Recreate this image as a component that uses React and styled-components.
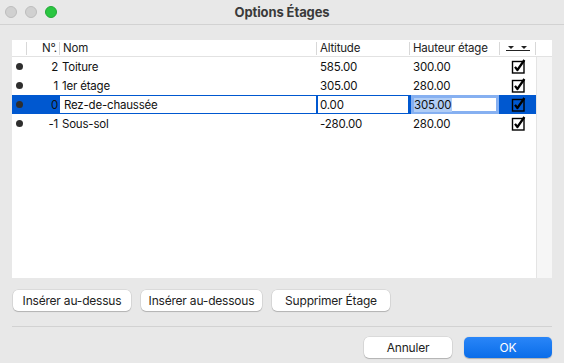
import React from "react";
import styled, { createGlobalStyle } from "styled-components";

const floors = [
  { num: 2, name: "Toiture", alt: "585.00", height: "300.00" },
  { num: 1, name: "1er étage", alt: "305.00", height: "280.00" },
  { num: 0, name: "Rez-de-chaussée", alt: "0.00", height: "305.00", selected: true },
  { num: -1, name: "Sous-sol", alt: "-280.00", height: "280.00" },
];

const COLS = "15px 33px 257px 93px 90px 36px";

const GlobalStyle = createGlobalStyle`
  html, body {
    margin: 0;
    padding: 0;
    background: #e8e8e8;
  }
  body {
    font-family: Inter, "Liberation Sans", sans-serif;
    font-size: 11.5px;
    letter-spacing: -0.2px;
    color: #1a1a1a;
  }
`;

export default function App() {
  return (
    <>
      <GlobalStyle />
      <Window>
        <TitleBar>
          <Lights>
            <Light />
            <Light />
            <Light $color="#2ac641" $border="#22a836" />
          </Lights>
          <Title>Options Étages</Title>
          <span />
        </TitleBar>

        <Content>
          <Table>
            <HeaderRow>
              <HeadCell />
              <HeadCell $align="right">N°.</HeadCell>
              <HeadCell>Nom</HeadCell>
              <HeadCell>Altitude</HeadCell>
              <HeadCell>Hauteur étage</HeadCell>
              <HeadCell $align="center">
                <SortIcon />
              </HeadCell>
              <HeadCell $last />
            </HeaderRow>
            <TableBody>
              <Rows>
                {floors.map((f) => (
                  <FloorRow key={f.num} floor={f} />
                ))}
              </Rows>
              <ScrollTrack />
            </TableBody>
          </Table>

          <ActionRow>
            <Button $w={118}>Insérer au-dessus</Button>
            <Button $w={121}>Insérer au-dessous</Button>
            <Button $w={118}>Supprimer Étage</Button>
          </ActionRow>

          <Divider />

          <Footer>
            <Button $w={88}>Annuler</Button>
            <Button $w={88} $primary>
              OK
            </Button>
          </Footer>
        </Content>
      </Window>
    </>
  );
}

function FloorRow({ floor }) {
  if (floor.selected) {
    return (
      <Row $selected>
        <Cell $align="center">
          <Dot />
        </Cell>
        <Cell $align="right">{floor.num}</Cell>
        <Cell>
          <EditField>{floor.name}</EditField>
        </Cell>
        <Cell>
          <EditField $inset>{floor.alt}</EditField>
        </Cell>
        <Cell>
          <FocusField>
            <Selection>{floor.height}</Selection>
          </FocusField>
        </Cell>
        <Cell $align="center">
          <CheckBox />
        </Cell>
      </Row>
    );
  }
  return (
    <Row>
      <Cell $align="center">
        <Dot />
      </Cell>
      <Cell $align="right">{floor.num}</Cell>
      <Cell $pad={2}>{floor.name}</Cell>
      <Cell $pad={3}>{floor.alt}</Cell>
      <Cell $pad={3}>{floor.height}</Cell>
      <Cell $align="center">
        <CheckBox />
      </Cell>
    </Row>
  );
}

function SortIcon() {
  return (
    <svg width="24" height="8" viewBox="0 0 24 8">
      <path d="M2 2h6l-3 3z" fill="#222" />
      <path d="M15 2h6l-3 3z" fill="#222" />
      <path d="M0 6.5h24" stroke="#222" strokeWidth="1" />
    </svg>
  );
}

function CheckBox() {
  return (
    <svg width="15" height="15" viewBox="0 0 15 15">
      <rect x="1.5" y="2.5" width="11.5" height="11.5" fill="none" stroke="#000" strokeWidth="1.4" />
      <path d="M4 7.8l2.4 3.2L13.4 1" fill="none" stroke="#000" strokeWidth="2.2" strokeLinejoin="round" />
    </svg>
  );
}

const Window = styled.div`
  width: 564px;
  height: 363px;
  display: flex;
  flex-direction: column;
  background: #e8e8e8;
  overflow: hidden;
`;

const TitleBar = styled.div`
  height: 24px;
  flex: none;
  display: grid;
  grid-template-columns: 1fr auto 1fr;
  align-items: center;
  border-bottom: 1px solid #d2d2d2;
  background: #e8e8e8;
`;

const Lights = styled.div`
  display: flex;
  gap: 8px;
  padding-left: 5px;
`;

const Light = styled.div`
  width: 12px;
  height: 12px;
  border-radius: 50%;
  box-sizing: border-box;
  background: ${({ $color }) => $color || "#d0d0d0"};
  border: 0.5px solid ${({ $border }) => $border || "#bdbdbd"};
`;

const Title = styled.div`
  font-size: 13px;
  font-weight: 700;
  letter-spacing: -0.1px;
  color: #3a3a3a;
`;

const Content = styled.div`
  padding: 15px 12px 0 12px;
  display: flex;
  flex-direction: column;
`;

const Table = styled.div`
  width: 540px;
  height: 238px;
  background: #fff;
  display: flex;
  flex-direction: column;
`;

const HeaderRow = styled.div`
  display: grid;
  grid-template-columns: ${COLS} 16px;
  height: 16px;
  align-items: center;
  border-bottom: 1px solid #e2e2e2;
  color: #222;
`;

const HeadCell = styled.div`
  height: 13px;
  line-height: 13px;
  display: flex;
  align-items: center;
  justify-content: ${({ $align }) =>
    $align === "right" ? "flex-end" : $align === "center" ? "center" : "flex-start"};
  padding: ${({ $align }) => ($align === "right" ? "0 2px 0 0" : $align === "center" ? "0" : "0 0 0 3px")};
  border-right: ${({ $last }) => ($last ? "none" : "1px solid #d8d8d8")};
  white-space: nowrap;
`;

const TableBody = styled.div`
  flex: 1;
  display: flex;
`;

const Rows = styled.div`
  flex: 1;
  display: flex;
  flex-direction: column;
`;

const ScrollTrack = styled.div`
  width: 15px;
  background: #f6f6f6;
  border-left: 1px solid #e4e4e4;
`;

const Row = styled.div`
  display: grid;
  grid-template-columns: ${COLS};
  height: 19px;
  align-items: center;
  background: ${({ $selected }) => ($selected ? "#0058d0" : "transparent")};
  color: #111;
`;

const Cell = styled.div`
  height: 19px;
  display: flex;
  align-items: center;
  justify-content: ${({ $align }) =>
    $align === "right" ? "flex-end" : $align === "center" ? "center" : "flex-start"};
  padding-left: ${({ $pad }) => ($pad || 0)}px;
  padding-right: ${({ $align }) => ($align === "right" ? 2 : 0)}px;
  white-space: nowrap;
`;

const Dot = styled.div`
  width: 7px;
  height: 7px;
  border-radius: 50%;
  background: #2e2e2e;
`;

const EditField = styled.div`
  flex: 1;
  align-self: stretch;
  margin: 1px ${({ $inset }) => ($inset ? "2px 1px 1px" : "1px 1px 0")};
  background: #fff;
  display: flex;
  align-items: center;
  padding-left: ${({ $inset }) => ($inset ? 2 : 4)}px;
  color: #111;
`;

const FocusField = styled.div`
  flex: 1;
  align-self: stretch;
  margin: 0 1px;
  border: 3px solid #86b0f1;
  background: #fff;
  display: flex;
  align-items: center;
  padding-left: 0;
`;

const Selection = styled.span`
  background: #b0cdf6;
  color: #111;
  line-height: 14px;
  padding-right: 1px;
`;

const ActionRow = styled.div`
  display: flex;
  gap: 10px;
  margin-top: 12px;
  padding-left: 1px;
`;

const Button = styled.button`
  width: ${({ $w }) => $w}px;
  height: 21px;
  border: none;
  border-radius: 5px;
  font-family: inherit;
  font-size: 12px;
  letter-spacing: -0.2px;
  padding: 0;
  color: ${({ $primary }) => ($primary ? "#fff" : "#222")};
  background: ${({ $primary }) =>
    $primary ? "linear-gradient(#2a86f8, #0a6de9)" : "#fff"};
  box-shadow: ${({ $primary }) =>
    $primary
      ? "0 0.5px 1px rgba(0,0,0,0.25)"
      : "0 0 0 0.5px rgba(0,0,0,0.12), 0 1px 1px rgba(0,0,0,0.18)"};
`;

const Divider = styled.div`
  height: 1px;
  background: #d2d2d2;
  margin-top: 15px;
  width: 540px;
`;

const Footer = styled.div`
  display: flex;
  justify-content: flex-end;
  gap: 12px;
  margin-top: 10px;
  padding-right: 1px;
  width: 540px;
`;
